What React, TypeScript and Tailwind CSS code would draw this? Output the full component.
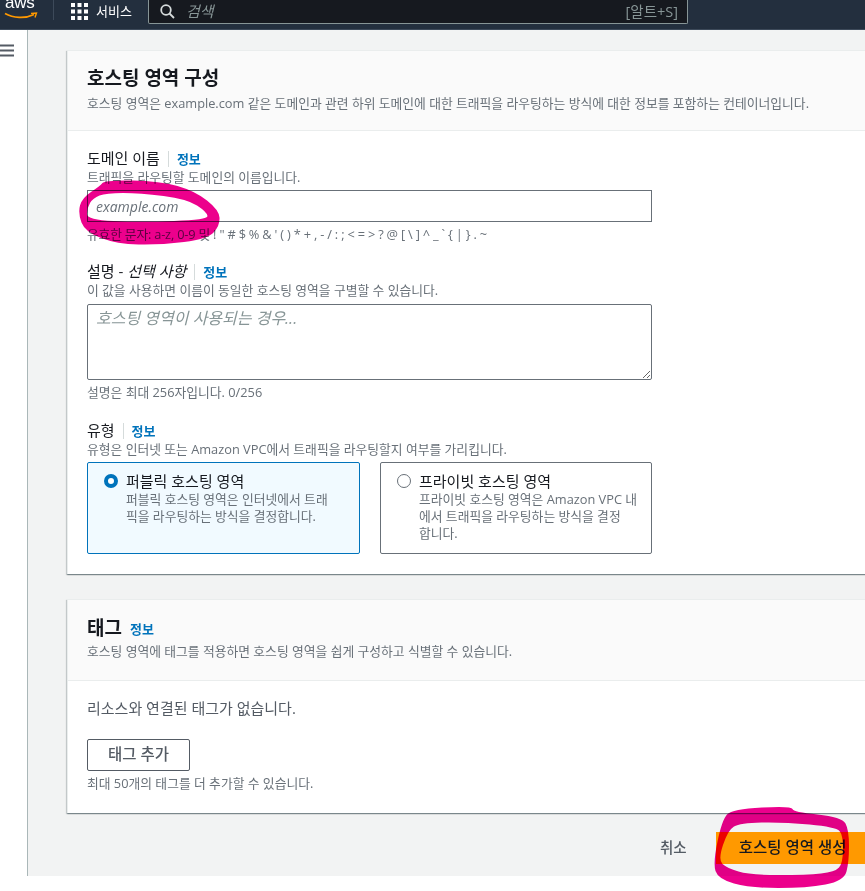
import React from "react";

const font = { fontFamily: '"Open Sans","Noto Sans CJK KR",sans-serif' };

type Pt = [number, number];

function smooth(points: Pt[]): string {
  const n = points.length;
  const mid = (a: Pt, b: Pt): Pt => [(a[0] + b[0]) / 2, (a[1] + b[1]) / 2];
  const start = mid(points[n - 1], points[0]);
  let d = `M${start[0]} ${start[1]}`;
  for (let i = 0; i < n; i++) {
    const m = mid(points[i], points[(i + 1) % n]);
    d += ` Q${points[i][0]} ${points[i][1]} ${m[0]} ${m[1]}`;
  }
  return d + " Z";
}

const ovalOuter: Pt[] = [[105, 180], [160, 181], [195, 191], [219, 210], [220, 225], [208, 239], [160, 245], [117, 244], [85, 232], [78, 213], [82, 198], [100, 186]];
const ovalInner: Pt[] = [[106, 193], [140, 193], [187, 199], [207, 212], [208, 220], [140, 222], [87, 220], [87, 208], [93, 198]];
const btnOuter: Pt[] = [[732, 809], [792, 806], [793, 812], [842, 817], [849, 830], [849, 862], [844, 881], [807, 888], [750, 888], [718, 879], [713, 863], [722, 820]];
const btnInner: Pt[] = [[740, 823], [783, 822], [836, 827], [843, 835], [843, 863], [835, 872], [807, 875], [750, 875], [727, 868], [718, 860], [728, 830]];

function Info() {
  return (
    <span className="ml-[8px] border-l border-[#d5dbdb] pl-[8px] text-[13px] leading-[16px] font-bold text-[#0073bb]">정보</span>
  );
}

function Label({ title, italic }: { title: string; italic?: string }) {
  return (
    <div className="flex items-center text-[15px] leading-[21px] text-[#16191f]">
      <span>
        {title}
        {italic && <i> {italic}</i>}
      </span>
      <Info />
    </div>
  );
}

function Hint({ children }: { children: React.ReactNode }) {
  return <div className="whitespace-nowrap text-[12.8px] leading-[16px] text-[#687078]">{children}</div>;
}

function Radio({ selected, title, lines }: { selected?: boolean; title: string; lines: string[] }) {
  return (
    <div
      className={
        selected
          ? "flex h-[92px] w-[273px] gap-[8px] rounded-[2px] border border-[#0073bb] bg-[#f1faff] pl-[16px] pt-[8px]"
          : "flex h-[92px] w-[272px] gap-[8px] rounded-[2px] border border-[#687078] bg-white pl-[16px] pt-[8px]"
      }
    >
      <div className="pt-[3px]">
        {selected ? (
          <div className="h-[14px] w-[14px] rounded-full border-[4px] border-[#0073bb] bg-white" />
        ) : (
          <div className="h-[14px] w-[14px] rounded-full border border-[#687078] bg-white" />
        )}
      </div>
      <div>
        <div className="text-[15px] leading-[20px] text-[#16191f]">{title}</div>
        {lines.map((l) => (
          <div key={l} className="whitespace-nowrap text-[12.8px] leading-[17px] text-[#687078]">{l}</div>
        ))}
      </div>
    </div>
  );
}

export default function App() {
  return (
    <div className="relative flex h-[891px] w-[865px] flex-col overflow-hidden bg-white" style={font}>
      <header className="flex h-[30px] shrink-0 items-start border-b border-[#3d4a5a] bg-[#232f3e]">
        <div className="relative h-[29px] w-[53px] shrink-0">
          <span className="absolute left-[5px] top-[-9px] text-[17px] leading-[24px] font-normal tracking-[-0.3px] text-white" style={{ fontFamily: '"Liberation Sans",sans-serif' }}>aws</span>
          <svg className="absolute left-[4px] top-[12px]" width="34" height="8" viewBox="0 0 34 8">
            <path d="M1 1.5 C9 6 21 7 30 2.5" fill="none" stroke="#f90" strokeWidth="1.8" />
            <path d="M27 1.4 L32.5 1 L31 5.5" fill="none" stroke="#f90" strokeWidth="1.4" />
          </svg>
        </div>
        <div className="mt-[-4px] h-[24px] w-px bg-[#3d4a5a]" />
        <div className="flex h-[23px] w-[94px] shrink-0 items-center pl-[17px]">
          <svg width="17" height="17" viewBox="0 0 17 17" fill="#fff">
            {[0, 6.5, 13].map((y) =>
              [0, 6.5, 13].map((x) => <rect key={`${x}-${y}`} x={x} y={y} width="4" height="4" />)
            )}
          </svg>
          <span className="ml-[8px] text-[13px] text-white">서비스</span>
        </div>
        <div className="flex h-[24px] w-[540px] shrink-0 items-center rounded-br-[2px] rounded-bl-[2px] border border-t-0 border-[#879596] bg-[#16191f] pl-[11px] pr-[9px]">
          <svg width="15" height="15" viewBox="0 0 15 15" fill="none" stroke="#d5dbdb" strokeWidth="1.8">
            <circle cx="6" cy="6" r="4.8" />
            <path d="M9.5 9.5 L14 14" />
          </svg>
          <i className="ml-[11px] text-[15px] text-[#879596]">검색</i>
          <span className="ml-auto text-[14.5px] text-[#879596]">[알트+S]</span>
        </div>
      </header>

      <div className="flex h-[846px] shrink-0">
        <nav className="w-[28px] shrink-0 border-r border-[#aab7b8] bg-white pt-[14px]">
          <svg width="15" height="13" viewBox="0 0 15 13" stroke="#545b64" strokeWidth="1.8">
            <path d="M0 1.5H14M0 6.5H14M0 11.5H14" />
          </svg>
        </nav>
        <main className="flex-1 overflow-hidden bg-[#f2f3f3] pl-[39px] pt-[20px]">
          <section className="h-[524px] w-[830px] border-l border-t border-[#eaeded] bg-white shadow-[0_1px_1px_0_rgba(0,28,36,0.3),1px_1px_1px_0_rgba(0,28,36,0.15),-1px_1px_1px_0_rgba(0,28,36,0.15)]">
            <div className="h-[80px] border-b border-[#eaeded] bg-[#fafafa] pl-[19px] pt-[13px]">
              <h2 className="text-[19px] leading-[28px] font-bold text-[#16191f]">호스팅 영역 구성</h2>
              <div className="mt-[3px]">
                <Hint>호스팅 영역은 example.com 같은 도메인과 관련 하위 도메인에 대한 트래픽을 라우팅하는 방식에 대한 정보를 포함하는 컨테이너입니다.</Hint>
              </div>
            </div>
            <div className="pl-[19px] pt-[17px]">
              <Label title="도메인 이름" />
              <Hint>트래픽을 라우팅할 도메인의 이름입니다.</Hint>
              <div className="mt-[5px] flex h-[32px] w-[565px] items-center border border-[#687078] bg-white pl-[8px] text-[14px] text-[#687078] italic">example.com</div>
              <div className="mt-[4px] h-[16px] tracking-[-0.2px]"><Hint>유효한 문자: a-z, 0-9 및 ! " # $ % &amp; ' ( ) * + , - / : ; &lt; = &gt; ? @ [ \ ] ^ _ ` { "{" } | { "}" } . ~</Hint></div>

              <div className="mt-[19px]"><Label title="설명 -" italic="선택 사항" /></div>
              <Hint>이 값을 사용하면 이름이 동일한 호스팅 영역을 구별할 수 있습니다.</Hint>
              <textarea
                readOnly
                placeholder="호스팅 영역이 사용되는 경우..."
                className="mt-[6px] block h-[76px] w-[565px] rounded-[2px] border border-[#687078] bg-white px-[8px] py-[1px] text-[16px] italic placeholder:text-[#879596]"
              />
              <div className="mt-[4px]"><Hint>설명은 최대 256자입니다. 0/256</Hint></div>

              <div className="mt-[20px]"><Label title="유형" /></div>
              <Hint>유형은 인터넷 또는 Amazon VPC에서 트래픽을 라우팅할지 여부를 가리킵니다.</Hint>
              <div className="mt-[5px] flex gap-[20px]">
                <Radio selected title="퍼블릭 호스팅 영역" lines={["퍼블릭 호스팅 영역은 인터넷에서 트래", "픽을 라우팅하는 방식을 결정합니다."]} />
                <Radio title="프라이빗 호스팅 영역" lines={["프라이빗 호스팅 영역은 Amazon VPC 내", "에서 트래픽을 라우팅하는 방식을 결정", "합니다."]} />
              </div>
            </div>
          </section>

          <section className="mt-[25px] w-[830px] border-l border-t border-[#eaeded] bg-white shadow-[0_1px_1px_0_rgba(0,28,36,0.3),1px_1px_1px_0_rgba(0,28,36,0.15),-1px_1px_1px_0_rgba(0,28,36,0.15)]">
            <div className="h-[81px] border-b border-[#eaeded] bg-[#fafafa] pl-[19px] pt-[14px]">
              <div className="flex items-center">
                <h2 className="text-[19px] leading-[28px] font-bold text-[#16191f]">태그</h2>
                <span className="ml-[8px] mt-[3px] text-[13px] font-bold text-[#0073bb]">정보</span>
              </div>
              <div className="mt-[1px]">
                <Hint>호스팅 영역에 태그를 적용하면 호스팅 영역을 쉽게 구성하고 식별할 수 있습니다.</Hint>
              </div>
            </div>
            <div className="h-[132px] pl-[19px] pt-[17px]">
              <div className="text-[15px] leading-[20px] text-[#545b64]">리소스와 연결된 태그가 없습니다.</div>
              <div className="mt-[21px] flex h-[32px] w-[103px] items-center justify-center rounded-[2px] border border-[#545b64] bg-white text-[15.5px] font-medium text-[#545b64]">태그 추가</div>
              <div className="mt-[4px]"><Hint>최대 50개의 태그를 더 추가할 수 있습니다.</Hint></div>
            </div>
          </section>

          <div className="mt-[19px] flex h-[32px] items-center">
            <span className="ml-[593px] shrink-0 whitespace-nowrap text-[14.5px] font-medium text-[#545b64]">취소</span>
            <div className="ml-[29px] flex h-[32px] w-[160px] shrink-0 items-center whitespace-nowrap bg-[#ff9900] pl-[23px] text-[15.5px] font-medium text-[#16191f]">호스팅 영역 생성</div>
          </div>
        </main>
      </div>

      <svg className="pointer-events-none absolute left-0 top-0 mix-blend-multiply" width="865" height="891" viewBox="0 0 865 891" fill="#ec008c" fillRule="evenodd">
        <path d={`${smooth(ovalOuter)} ${smooth(ovalInner)}`} />
        <path d={`${smooth(btnOuter)} ${smooth(btnInner)}`} />
      </svg>
    </div>
  );
}
